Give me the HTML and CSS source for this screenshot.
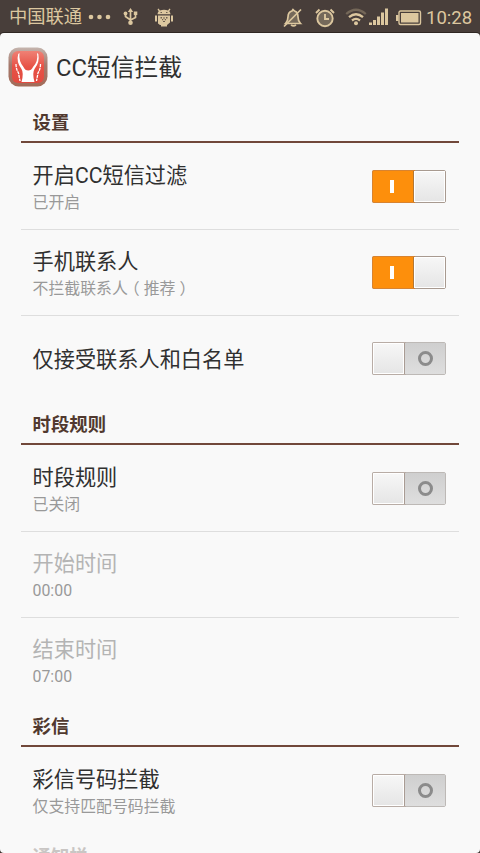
FILE: index.html
```html
<!DOCTYPE html>
<html lang="zh-CN">
<head>
<meta charset="utf-8">
<title>CC短信拦截</title>
<link rel="stylesheet" href="styles.css">
</head>
<body>
<header class="status">
  <span class="carrier">中国联通</span>
  <svg class="dots" width="24" height="8" viewBox="0 0 24 8"><circle cx="4" cy="4" r="2.300"/><circle cx="12.500" cy="4" r="2.300"/><circle cx="21" cy="4" r="2.300"/></svg>
  <svg class="usb" width="16" height="18" viewBox="0 0 16 18" fill="none" stroke="currentColor" stroke-width="1.700"><path d="M7.500 3v11M2.500 6v2.500l5 3.500 5-2.500V6"/><path d="M7.500 0l2.700 4H4.800zM10.800 3.500h3.500V7h-3.500z" fill="currentColor" stroke="none"/><circle cx="2.500" cy="5.500" r="1.900" fill="currentColor" stroke="none"/><circle cx="7.500" cy="14.800" r="2.300" fill="currentColor" stroke="none"/></svg>
  <svg class="droid" width="18" height="20" viewBox="0 0 18 20" fill="currentColor"><path d="M3.500.5L5 2.500q4-1.500 8 0L14.500.5l1 .8L14.300 3.300Q15.500 4.600 15.500 6.300h-13Q2.500 4.600 3.700 3.300L2.500 1.300zM3 7.500h12v7l-3 2.500V18.500H6V17H5L3 15.500zM0 7.500h2v6H0zM16 7.500h2v6h-2z"/><path class="cut" d="M5.500 4H7v1H5.500zM11 4h1.500v1H11zM5.500 9H7v1.500H5.500zM11 9h1.500v1.500H11zM8 9.500h2v1H8zM7 11h1.200v1.200H7zM9.800 11H11v1.200H9.800zM8 13h2v1H8z"/></svg>
  <span class="spacer"></span>
  <svg class="bell" width="20" height="20" viewBox="0 0 20 20" fill="none" stroke="currentColor" stroke-width="1.700"><path class="tint" d="M2.500 15.500Q5 13 5 9q0-5 4-6l1-1.500L11.500 3Q15 4 15 9q0 4 2.500 6.500z"/><path d="M8 16.800q2.500 2 5 0M1 18.500L18 1.500"/></svg>
  <svg class="alarm" width="20" height="20" viewBox="0 0 20 20" fill="none" stroke="currentColor" stroke-width="1.900"><circle class="tint" cx="10" cy="10.500" r="7.700"/><path d="M10 6v5h4M1 5l3.500-3.500M19 5l-3.500-3.500"/></svg>
  <svg class="wifi" width="22" height="18" viewBox="0 0 22 18" fill="none" stroke="currentColor" stroke-width="2.300"><path opacity=".3" d="M1.200 6q9.800-8.500 19.600 0"/><path d="M4 9.200q7-6 14 0M7 12.500q4-3.300 8 0"/><circle cx="11" cy="15.300" r="2" fill="currentColor" stroke="none"/></svg>
  <svg class="signal" width="20" height="18" viewBox="0 0 20 18" fill="currentColor"><path d="M0 14.500h3V17H0zM4 12h3v5H4zM8 8.500h3V17H8zM12 4.500h3V17h-3zM16 .5h3V17h-3z"/></svg>
  <svg class="battery" width="26" height="16" viewBox="0 0 26 16" fill="currentColor"><path d="M0 5h2.500v6H0z"/><rect x="3" y="1" width="21.500" height="13.500" rx="1.500" fill="none" stroke="currentColor" stroke-width="1.400"/><rect x="5" y="3" width="17.500" height="9.500"/></svg>
  <span class="clock">10:28</span>
</header>
<main class="screen">
  <div class="titlebar">
    <svg class="logo" width="40" height="40" viewBox="0 0 40 40">
      <defs><linearGradient id="rim" x1="0" y1="0" x2="0" y2="1"><stop offset="0" stop-color="#c5b5ae"/><stop offset=".45" stop-color="#a5796c"/><stop offset="1" stop-color="#a36b58"/></linearGradient>
      <linearGradient id="red" x1="0" y1="0" x2="0" y2="1"><stop offset="0" stop-color="#ef8175"/><stop offset=".5" stop-color="#e75246"/><stop offset="1" stop-color="#e24a40"/></linearGradient></defs>
      <rect x=".5" y=".5" width="39" height="39" rx="10" fill="url(#rim)"/>
      <rect x="4" y="4" width="32" height="32" rx="6" fill="url(#red)"/>
      <path fill="#fff" d="M11.500 6Q10.500 14 15.500 20q1.500 3.500 4.700 3.500T25 20Q30.500 14 29 6l1.300 1Q32 15 26.500 22q-2.500 4 0 13h-13q2.500-9 0-13Q8 15 10.200 7z"/>
      <path fill="none" stroke="#fff" stroke-width="1.300" stroke-dasharray="3 .8" d="M8 17q0 5 2.500 9L12 34M32.500 17q0 5-2.500 9l-1.500 8"/>
    </svg>
    <h1>CC短信拦截</h1>
  </div>
  <div class="list">
    <h2>设置</h2>
    <div class="row"><div class="text"><div class="name">开启CC短信过滤</div><div class="note">已开启</div></div><div class="switch on"><i class="mark"></i><i class="knob"></i></div></div>
    <div class="row"><div class="text"><div class="name">手机联系人</div><div class="note">不拦截联系人<span class="open">（</span>推荐<span class="close">）</span></div></div><div class="switch on"><i class="mark"></i><i class="knob"></i></div></div>
    <div class="row last"><div class="text"><div class="name">仅接受联系人和白名单</div></div><div class="switch off"><i class="knob"></i><i class="mark"></i></div></div>
    <h2>时段规则</h2>
    <div class="row"><div class="text"><div class="name">时段规则</div><div class="note">已关闭</div></div><div class="switch off"><i class="knob"></i><i class="mark"></i></div></div>
    <div class="row disabled"><div class="text"><div class="name">开始时间</div><div class="note">00:00</div></div></div>
    <div class="row disabled last"><div class="text"><div class="name">结束时间</div><div class="note">07:00</div></div></div>
    <h2>彩信</h2>
    <div class="row last"><div class="text"><div class="name">彩信号码拦截</div><div class="note">仅支持匹配号码拦截</div></div><div class="switch off"><i class="knob"></i><i class="mark"></i></div></div>
    <h2 class="fading">通知栏</h2>
  </div>
</main>
</body>
</html>
```
FILE: styles.css
```css
*, *::after { box-sizing: border-box; }
body {
  margin: 0;
  height: 853px;
  overflow: hidden;
  background: #483e3a;
  font-family: Roboto, "Noto Sans CJK SC", sans-serif;
  color: #303030;
}
.status {
  height: 33px;
  padding: 1px 8px 0 9px;
  display: flex;
  align-items: center;
  color: #dcc79f;
}
.status svg { flex: none; }
.carrier { font-size: 18.3px; line-height: 32px; width: 74px; white-space: nowrap; }
.dots { margin-left: 4px; fill: #dcc79f; }
.usb { margin-left: 12px; }
.droid { margin-left: 16px; }
.cut { fill: #6d6050; }
.tint { fill: #75695a; }
.spacer { flex: 1; }
.bell, .alarm, .droid { margin-top: 2px; }
.alarm { margin-left: 12px; }
.wifi { margin-left: 10px; }
.signal { margin-left: 2px; }
.battery { margin-left: 7px; margin-top: 2px; }
.clock { margin-left: 4px; width: 46px; padding-top: 2px; font-size: 18.5px; line-height: 32px; white-space: nowrap; }
.screen {
  height: 820px;
  overflow: hidden;
  background: #f9f9f9;
  border-radius: 4px;
  box-shadow: 0 0 0 1px #2f2723;
}
.titlebar {
  height: 67px;
  padding: 1px 0 0 8px;
  display: flex;
  align-items: center;
}
h1 { margin: 0 0 0 8px; padding-top: 1px; font-size: 23.8px; font-weight: 400; line-height: 32px; }
.list { margin: 0 21px; }
h2 {
  margin: 0 0 1px;
  height: 43px;
  padding: 3px 12px 0 11.5px;
  border-bottom: 2px solid #71483a;
  font-size: 18.4px;
  line-height: 40px;
  font-weight: 700;
  color: #51392f;
}
h2.fading { color: #c9c6c4; }
.row {
  height: 86px;
  padding: 0 13px 0 11.5px;
  border-bottom: 1px solid #dedede;
  display: flex;
  align-items: center;
  justify-content: space-between;
}
.row.last { border-bottom-color: transparent; }
.text { padding-top: 2px; }
.name { font-size: 21.2px; line-height: 30px; }
.note { font-size: 15.9px; line-height: 24px; color: #999; }
.open, .close { display: inline-block; }
.open { transform: translateX(-4px); }
.close { transform: translateX(4px); }
.disabled .name { color: #b4b4b4; }
.switch {
  width: 74px;
  height: 33px;
  display: flex;
  border: 1px solid #bdb9b6;
  border-radius: 2px;
}
.switch .knob {
  background: linear-gradient(#f7f7f7, #e5e5e5);
  box-shadow: inset 0 0 0 1px #fff;
}
.on { border-color: #a89a90; }
.on .knob { width: 31px; }
.on .mark {
  width: 41px;
  background: #fd8f0c;
  border-right: 1px solid #b27837;
  border-radius: 1px 0 0 1px;
  display: flex;
  align-items: center;
  justify-content: center;
  box-shadow: 0 0 0 1px #d88330;
}
.on .mark::after { content: ""; width: 4px; height: 13px; background: #fff; margin-right: 2px; }
.off .knob {
  width: 32px;
  border-right: 1px solid #a99c94;
  border-radius: 1px 0 0 1px;
  box-shadow: inset 0 0 0 1px #fff, 0 0 0 1px #b8aca5;
}
.off .mark {
  flex: 1;
  background: linear-gradient(#cfcfcf, #dedede);
  display: flex;
  align-items: center;
  justify-content: center;
}
.off .mark::after {
  content: "";
  width: 15px;
  height: 15px;
  margin-left: 1px;
  border: 3px solid #8b8b8b;
  border-radius: 50%;
}
```
